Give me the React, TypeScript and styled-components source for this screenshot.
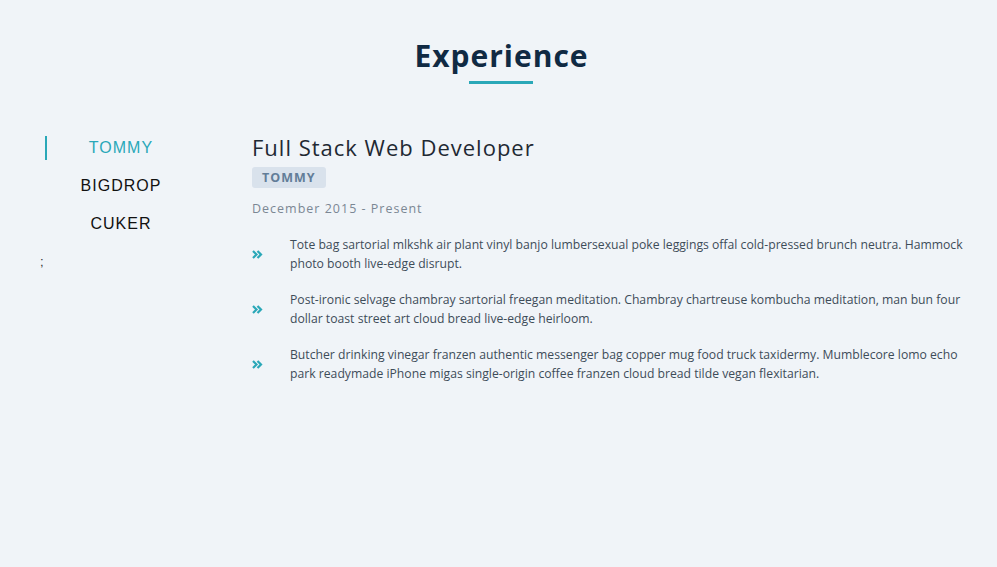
import React, { useState } from "react";
import styled, { createGlobalStyle } from "styled-components";

const GlobalStyle = createGlobalStyle`
  html, body { margin: 0; padding: 0; background: #f0f4f8; }
  body { font-family: "Open Sans", "Noto Sans", sans-serif; }
  * { box-sizing: border-box; }
`;

const Page = styled.section`
  min-height: 567px;
  padding: 34px 28px 0 28px;
  background: #f0f4f8;
`;

const Heading = styled.h2`
  margin: 0 auto;
  text-align: center;
  font-family: "Open Sans", sans-serif;
  font-size: 30px;
  font-weight: 700;
  letter-spacing: 1px;
  color: #102a43;
  line-height: 44px;
  padding-left: 6px;
`;

const Underline = styled.div`
  width: 64px;
  height: 3px;
  background: #2aa8b8;
  margin: 3px 0 0 calc(50% - 30px);
`;

const Body = styled.div`
  display: flex;
  margin-top: 49px;
  align-items: flex-start;
`;

const Side = styled.div`
  width: 224px;
  padding-left: 12px;
  flex-shrink: 0;
  display: flex;
  flex-direction: column;
`;

const TabList = styled.div`
  display: flex;
  flex-direction: column;
  gap: 14px;
  padding: 3px 0 0 5px;
`;

const Tab = styled.button<{ $active: boolean }>`
  width: 150px;
  height: 24px;
  background: transparent;
  border: none;
  border-left: 2px solid ${(p) => (p.$active ? "#2aa8b8" : "transparent")};
  padding: 0;
  font-family: "Liberation Sans", Arial, sans-serif;
  font-size: 16px;
  letter-spacing: 1px;
  color: ${(p) => (p.$active ? "#2aa8b8" : "#111")};
  cursor: pointer;
  text-align: center;
`;

const Semi = styled.div`
  font-family: "Liberation Sans", Arial, sans-serif;
  font-size: 13px;
  color: #333;
  margin-top: 18px;
`;

const Content = styled.div`
  flex: 1;
`;

const Title = styled.h3`
  margin: 0;
  font-family: "Open Sans", sans-serif;
  font-weight: 400;
  font-size: 22px;
  letter-spacing: 1px;
  color: #1f2933;
  line-height: 28px;
`;

const Badge = styled.span`
  display: inline-block;
  margin-top: 6px;
  padding: 2px 10px;
  background: #d9e2ec;
  border-radius: 3px;
  color: #627d98;
  font-family: "Open Sans", sans-serif;
  font-weight: 700;
  font-size: 12.5px;
  letter-spacing: 1px;
  line-height: 17px;
`;

const DateText = styled.div`
  margin-top: 12px;
  font-size: 12.5px;
  letter-spacing: 1px;
  color: #7b8794;
  line-height: 17px;
`;

const List = styled.ul`
  list-style: none;
  margin: 18px 0 0 0;
  padding: 0;
  display: flex;
  flex-direction: column;
  gap: 17px;
`;

const Item = styled.li`
  display: flex;
  align-items: center;
`;

const Icon = styled.span`
  width: 38px;
  flex-shrink: 0;
  display: flex;
  align-items: center;
  color: #2aa8b8;
`;

const ItemText = styled.p`
  margin: 0;
  font-size: 12.2px;
  line-height: 19px;
  color: #3e4c59;
`;

const Chevrons = () => (
  <svg width="11" height="9" viewBox="0 0 11 9" fill="none">
    <path d="M1 1 L4.5 4.5 L1 8 M5.5 1 L9 4.5 L5.5 8" stroke="#2aa8b8" strokeWidth="2.2" />
  </svg>
);

const jobs = ["TOMMY", "BIGDROP", "CUKER"];

const bullets = [
  "Tote bag sartorial mlkshk air plant vinyl banjo lumbersexual poke leggings offal cold-pressed brunch neutra. Hammock photo booth live-edge disrupt.",
  "Post-ironic selvage chambray sartorial freegan meditation. Chambray chartreuse kombucha meditation, man bun four dollar toast street art cloud bread live-edge heirloom.",
  "Butcher drinking vinegar franzen authentic messenger bag copper mug food truck taxidermy. Mumblecore lomo echo park readymade iPhone migas single-origin coffee franzen cloud bread tilde vegan flexitarian.",
];

export default function App() {
  const [active, setActive] = useState(0);
  return (
    <>
      <GlobalStyle />
      <Page>
        <Heading>Experience</Heading>
        <Underline />
        <Body>
          <Side>
            <TabList>
              {jobs.map((j, i) => (
                <Tab key={j} $active={i === active} onClick={() => setActive(i)}>
                  {j}
                </Tab>
              ))}
            </TabList>
            <Semi>;</Semi>
          </Side>
          <Content>
            <Title>Full Stack Web Developer</Title>
            <Badge>{jobs[active]}</Badge>
            <DateText>December 2015 - Present</DateText>
            <List>
              {bullets.map((b) => (
                <Item key={b}>
                  <Icon>
                    <Chevrons />
                  </Icon>
                  <ItemText>{b}</ItemText>
                </Item>
              ))}
            </List>
          </Content>
        </Body>
      </Page>
    </>
  );
}
